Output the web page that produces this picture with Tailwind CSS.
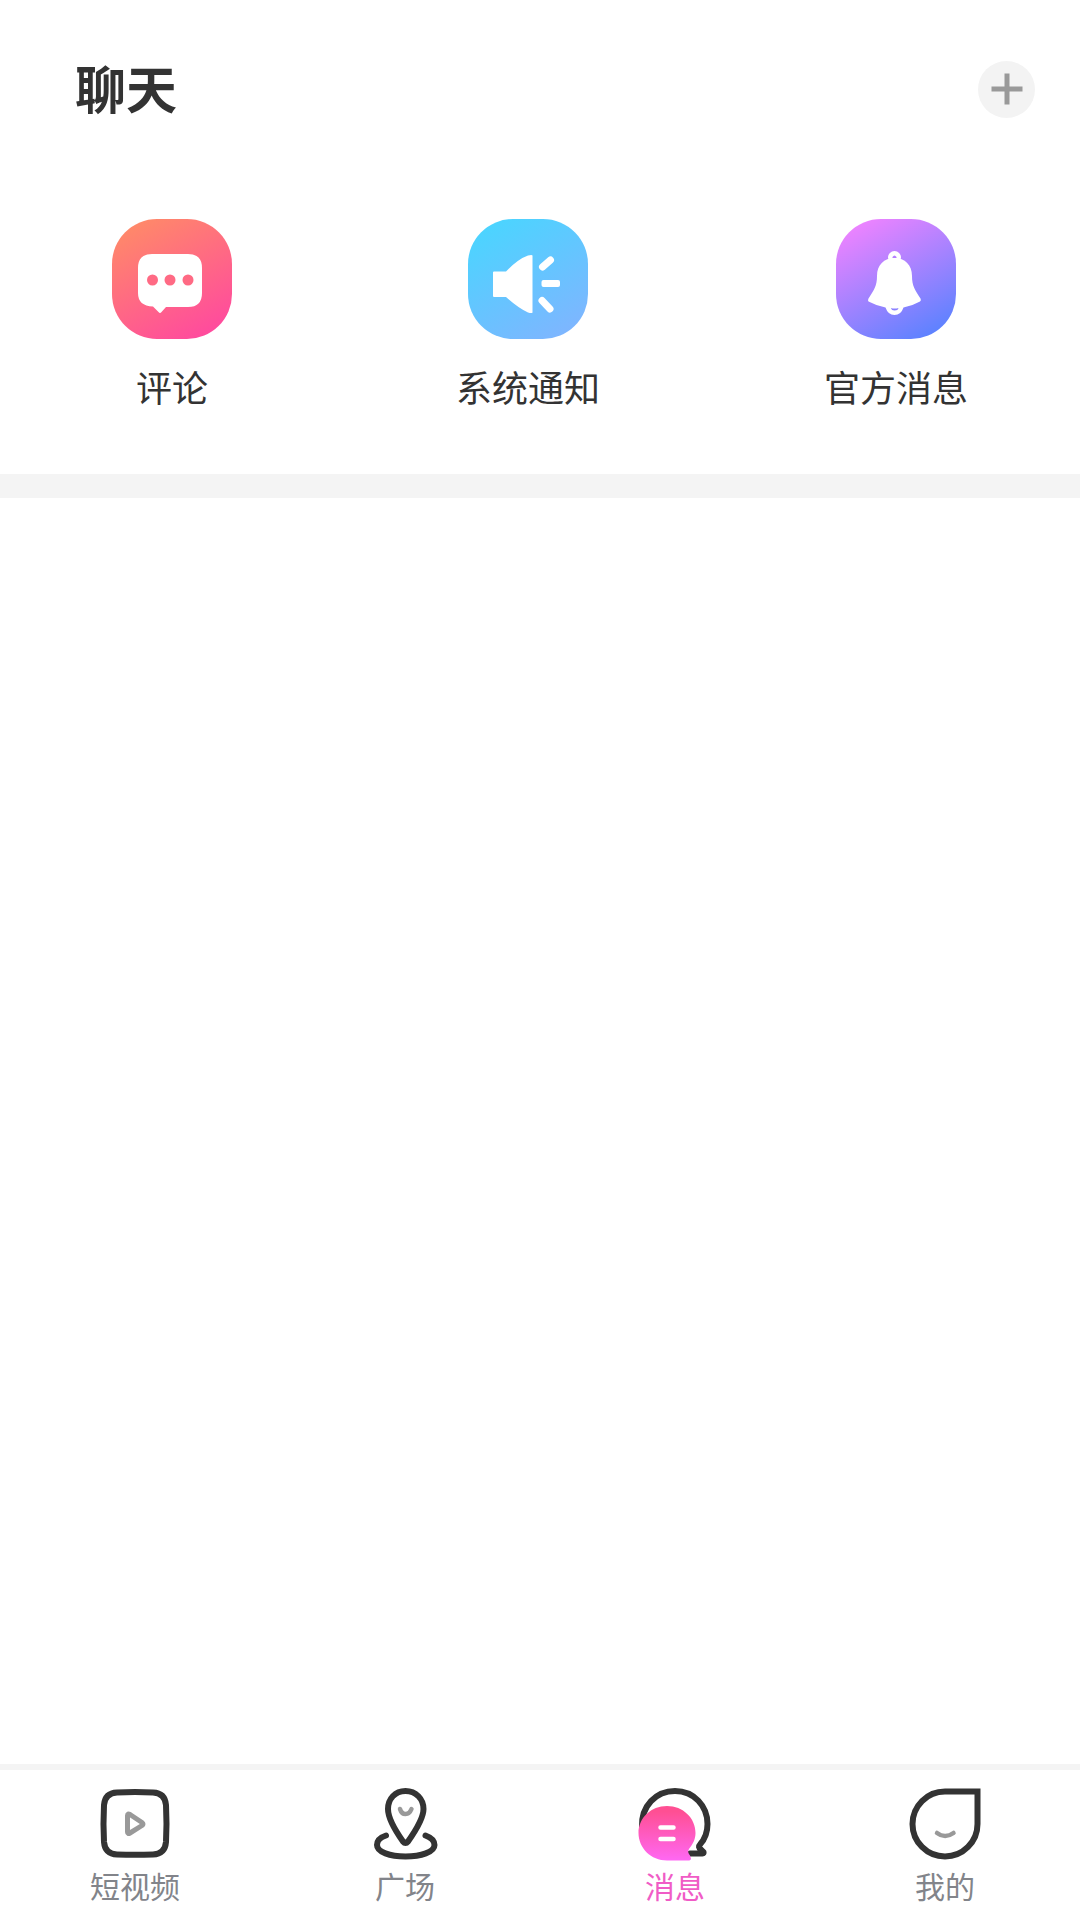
<!DOCTYPE html>
<html lang="zh-CN">

<head>
    <meta charset="UTF-8">
    <meta name="viewport" content="width=device-width, initial-scale=1.0">
    <title>聊天</title>
    <script src="https://cdn.jsdelivr.net/npm/@tailwindcss/browser@4"></script>
</head>

<body class="min-h-screen flex flex-col bg-white text-[#333333] font-['Noto_Sans_CJK_SC',sans-serif]">

    <!-- Header -->
    <header class="flex items-center justify-between pl-[75px] pr-[45px] pt-[52px]">
        <h1 class="text-[51px] leading-[70px] mb-1 font-bold">聊天</h1>
        <button type="button" aria-label="添加" class="size-[57px] rounded-full bg-[#f3f3f3] flex items-center justify-center">
            <svg class="size-8" viewBox="0 0 32 32" fill="none" stroke="#999999" stroke-width="5">
                <path d="M16 0.5V31.5M0.5 16H31.5" />
            </svg>
        </button>
    </header>

    <!-- Shortcuts -->
    <nav class="flex justify-around pt-[93px] pb-[62px] text-4xl leading-[52px]">
        <a href="#comments" class="flex flex-col items-center gap-[21px]">
            <svg class="size-[120px]" viewBox="0 0 120 120">
                <defs>
                    <linearGradient id="g-comment" x1="0.2" y1="0" x2="0.75" y2="1">
                        <stop offset="0" stop-color="#ff8a68" />
                        <stop offset="1" stop-color="#ff4a9e" />
                    </linearGradient>
                </defs>
                <rect width="120" height="120" rx="45" fill="url(#g-comment)" />
                <path fill="#fff" d="M40 35H76Q90 35 90 49V74Q90 88 76 88H54L49.500 93Q48 95 46.500 93L41 87.500Q26 87 26 74V49Q26 35 40 35Z" />
                <g fill="#ff6a84">
                    <circle cx="40.500" cy="61" r="5.500" />
                    <circle cx="58" cy="61" r="5.500" />
                    <circle cx="76" cy="61" r="5.500" />
                </g>
            </svg>
            <span>评论</span>
        </a>
        <a href="#system" class="flex flex-col items-center gap-[21px]">
            <svg class="size-[120px]" viewBox="0 0 120 120">
                <defs>
                    <linearGradient id="g-system" x1="0.2" y1="0" x2="0.8" y2="1">
                        <stop offset="0" stop-color="#4ad5ff" />
                        <stop offset="1" stop-color="#7fb5ff" />
                    </linearGradient>
                </defs>
                <rect width="120" height="120" rx="45" fill="url(#g-system)" />
                <path fill="#fff" d="M26 52.500H38Q50 40 60 36.500Q64 35.500 64.500 36.500V93.500Q64 94.500 60 93.500Q50 89 38 78H26Q25 78 25 77V53.500Q25 52.500 26 52.500Z" />
                <rect x="73.500" y="61" width="18.500" height="7" rx="2" fill="#fff" />
                <path d="M74.500 48L82.500 41M74 81.500L82 90" stroke="#fff" stroke-width="7" stroke-linecap="round" />
            </svg>
            <span>系统通知</span>
        </a>
        <a href="#official" class="flex flex-col items-center gap-[21px]">
            <svg class="size-[120px]" viewBox="0 0 120 120">
                <defs>
                    <linearGradient id="g-official" x1="0.2" y1="0" x2="0.75" y2="1">
                        <stop offset="0" stop-color="#f083ff" />
                        <stop offset="1" stop-color="#5c82ff" />
                    </linearGradient>
                </defs>
                <rect width="120" height="120" rx="45" fill="url(#g-official)" />
                <circle cx="58.500" cy="38.500" r="6.500" fill="#fff" />
                <path fill="#fff" d="M58.500 39C69 39 76 46 76 57C76 67 79 71 84.500 79.500Q85.500 81.500 84 82.500Q76 87 67.500 88.500Q65 96 58.500 96Q52 96 49.500 88.500Q41 87 32.500 82.500Q31.500 81.500 32.500 79.500C38 71 41 67 41 57C41 46 48 39 58.500 39Z" />
                <path fill="#b47fff" d="M56.500 39V38Q58.500 35 60.500 38V39Z" />
                <path fill="#8a80ff" d="M55 89Q58.500 90 62.500 89Q62 91.500 58.500 91.500Q55.500 91.500 55 89Z" />
            </svg>
            <span>官方消息</span>
        </a>
    </nav>

    <div class="h-6 bg-[#f4f4f4]"></div>

    <!-- Conversation list -->
    <main class="flex-1"></main>

    <!-- Tab bar -->
    <nav class="grid grid-cols-4 border-t-6 border-[#f4f4f4] pt-[15px] pb-[13px] text-3xl leading-[44px] text-[#82848a]">
        <a href="#video" class="flex flex-col items-center">
            <svg class="size-[78px]" viewBox="0 0 78 78" fill="none" stroke-linejoin="round">
                <path stroke="#333" stroke-width="6" d="M21 7.500Q39 6.500 57 7.500Q69 8 70 20Q71 39 70 57Q69 69 57 69.500Q39 70 21 69.500Q9 69 8 57Q7 39 8 20Q9 8 21 7.500Z" />
                <path stroke="#999" stroke-width="5" d="M31.500 30.500V47Q31.500 49.500 34 48L46 40.500Q48 39 46 37.500L34 29.500Q31.500 28 31.500 30.500Z" />
            </svg>
            <span>短视频</span>
        </a>
        <a href="#square" class="flex flex-col items-center">
            <svg class="size-[78px]" viewBox="0 0 78 78" fill="none" stroke-linecap="round" stroke-linejoin="round">
                <path stroke="#333" stroke-width="6" d="M39.500 6C29 6 22 14 22 24C22 34 31 48 37 56.500Q39.500 59.500 42 56.500C48 48 57.500 34 57.500 24C57.500 14 50 6 39.500 6Z" />
                <path stroke="#333" stroke-width="6" d="M20 50.500C14 52.500 11 56 11 60C11 67 24 71.500 39.500 71.500C55 71.500 68.500 67 68.500 60C68.500 56 65 52.500 59.500 50.500" />
                <path stroke="#999" stroke-width="4.500" d="M34 24Q35.500 29 39.500 29Q43.500 29 45.500 24" />
            </svg>
            <span>广场</span>
        </a>
        <a href="#messages" aria-current="page" class="flex flex-col items-center text-[#f05cc6]">
            <svg class="size-[78px]" viewBox="0 0 78 78" fill="none" stroke-linecap="round" stroke-linejoin="round">
                <defs>
                    <linearGradient id="g-message" x1="0" y1="0" x2="0" y2="1">
                        <stop offset="0.100" stop-color="#ff4f93" />
                        <stop offset="1" stop-color="#ff68f3" />
                    </linearGradient>
                </defs>
                <path stroke="#333" stroke-width="6" d="M6 42C5 21 20 6 39 6C58 6 71.500 21 71.500 39C71.500 47 69 54 64 59.500Q61.500 62 65 64.500L67.500 67Q68 68.500 66.500 68.500H54" />
                <path fill="url(#g-message)" d="M31 21C47 21 59.500 33 59.500 48C59.500 54 57 59 53 64Q51 67 54 70.500L55 73.500Q55 75.500 52 75.500H31C15 75.500 2.500 63 2.500 48C2.500 33 15 21 31 21Z" />
                <path stroke="#fff" stroke-width="4.500" d="M24.500 42.500H37.500M24.500 54H37.500" />
            </svg>
            <span>消息</span>
        </a>
        <a href="#me" class="flex flex-col items-center">
            <svg class="size-[78px]" viewBox="0 0 78 78" fill="none">
                <path stroke="#333" stroke-width="6" d="M39 6.500H71.500V39A32.500 32.500 0 1 1 39 6.500Z" />
                <path stroke="#999" stroke-width="4.500" stroke-linecap="round" d="M31 48Q39 54 47.500 48" />
            </svg>
            <span>我的</span>
        </a>
    </nav>

</body>

</html>
